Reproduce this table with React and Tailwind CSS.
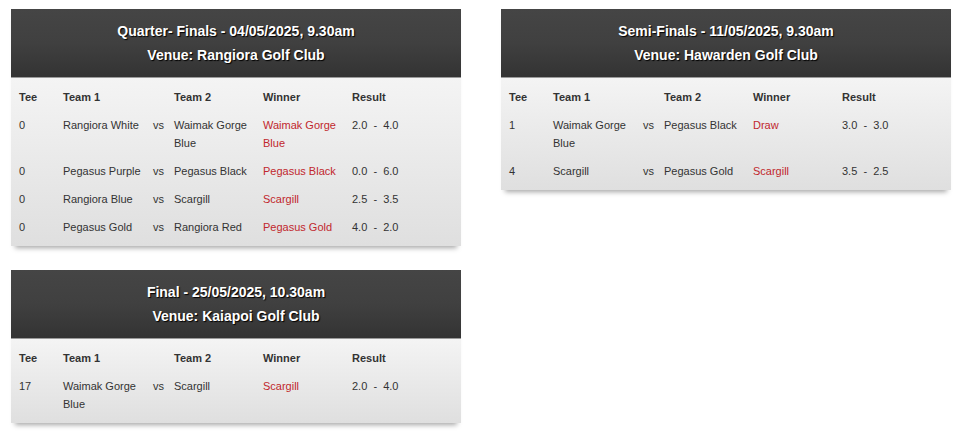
const rounds = [
  {
    title: "Quarter- Finals - 04/05/2025, 9.30am",
    venue: "Venue: Rangiora Golf Club",
    games: [
      { tee: "0", team1: "Rangiora White", team2: "Waimak Gorge Blue", winner: "Waimak Gorge Blue", result: ["2.0", "4.0"] },
      { tee: "0", team1: "Pegasus Purple", team2: "Pegasus Black", winner: "Pegasus Black", result: ["0.0", "6.0"] },
      { tee: "0", team1: "Rangiora Blue", team2: "Scargill", winner: "Scargill", result: ["2.5", "3.5"] },
      { tee: "0", team1: "Pegasus Gold", team2: "Rangiora Red", winner: "Pegasus Gold", result: ["4.0", "2.0"] },
    ],
  },
  {
    title: "Semi-Finals - 11/05/2025, 9.30am",
    venue: "Venue: Hawarden Golf Club",
    games: [
      { tee: "1", team1: "Waimak Gorge Blue", team2: "Pegasus Black", winner: "Draw", result: ["3.0", "3.0"] },
      { tee: "4", team1: "Scargill", team2: "Pegasus Gold", winner: "Scargill", result: ["3.5", "2.5"] },
    ],
  },
  {
    title: "Final - 25/05/2025, 10.30am",
    venue: "Venue: Kaiapoi Golf Club",
    games: [
      { tee: "17", team1: "Waimak Gorge Blue", team2: "Scargill", winner: "Scargill", result: ["2.0", "4.0"] },
    ],
  },
];

const cols = "grid grid-cols-[44px_90px_21px_89px_89px_1fr] pl-2";
const cell = "py-[5px] pr-1 leading-[18px]";

const RoundCard = ({ round }) => (
  <div className="w-[450px] shadow-[0_6px_5px_-4px_rgba(0,0,0,0.35)]">
    <div className="border-b border-[#9a9a9a] bg-gradient-to-b from-[#454545] via-[#404040] to-[#333333] py-[10px] text-center text-[14px] font-bold leading-[24px] text-white [text-shadow:1px_1px_1px_#000]">
      <div>{round.title}</div>
      <div>{round.venue}</div>
    </div>
    <div className="bg-gradient-to-b from-[#f4f4f4] to-[#dfdfdf] py-[5px] text-[11px] text-[#333]">
      <div className={`${cols} font-bold`}>
        <div className={cell}>Tee</div>
        <div className={cell}>Team 1</div>
        <div className={cell}></div>
        <div className={cell}>Team 2</div>
        <div className={cell}>Winner</div>
        <div className={cell}>Result</div>
      </div>
      {round.games.map((game, index) => (
        <div key={index} className={cols}>
          <div className={cell}>{game.tee}</div>
          <div className={cell}>{game.team1}</div>
          <div className={cell}>vs</div>
          <div className={cell}>{game.team2}</div>
          <div className={`${cell} text-[#c1272d]`}>{game.winner}</div>
          <div className={`${cell} whitespace-pre`}>
            {game.result[0]}  -  {game.result[1]}
          </div>
        </div>
      ))}
    </div>
  </div>
);

export default function App() {
  return (
    <div className="min-h-[432px] w-[958px] bg-white pl-[11px] pt-[9px] [font-family:'Liberation_Sans',Arial,sans-serif]">
      <div className="flex items-start gap-10">
        <div className="flex flex-col gap-6">
          <RoundCard round={rounds[0]} />
          <RoundCard round={rounds[2]} />
        </div>
        <RoundCard round={rounds[1]} />
      </div>
    </div>
  );
}
